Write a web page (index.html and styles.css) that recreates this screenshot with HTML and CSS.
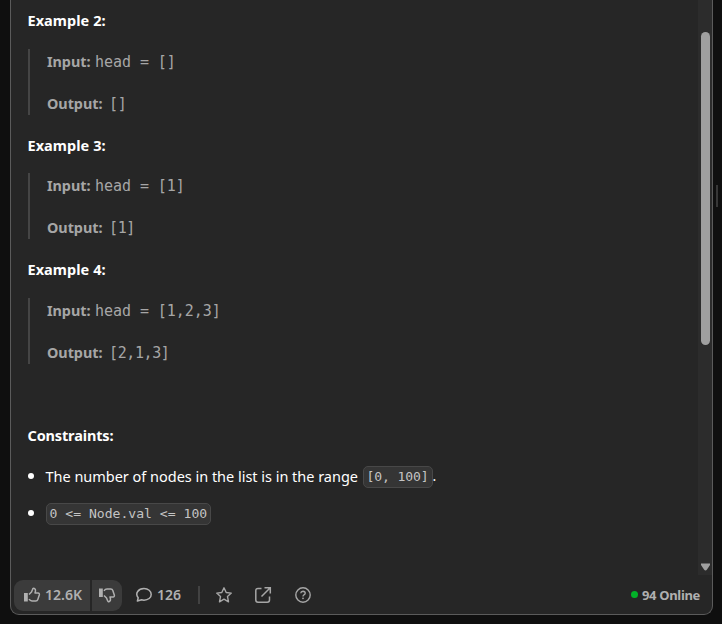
FILE: index.html
```html
<!DOCTYPE html>
<html lang="en">
<head>
<meta charset="utf-8">
<title>Problem description</title>
<link rel="stylesheet" href="styles.css">
</head>
<body>
<main class="panel">
  <div class="viewport">
    <article class="content">
      <h3>Example 2:</h3>
      <div class="example first">
        <p><b class="in">Input:</b><span class="mono">head = []</span></p>
        <p><b class="out">Output:</b><span class="mono">[]</span></p>
      </div>
      <h3>Example 3:</h3>
      <div class="example">
        <p><b class="in">Input:</b><span class="mono">head = [1]</span></p>
        <p><b class="out">Output:</b><span class="mono">[1]</span></p>
      </div>
      <h3>Example 4:</h3>
      <div class="example last">
        <p><b class="in">Input:</b><span class="mono">head = [1,2,3]</span></p>
        <p><b class="out">Output:</b><span class="mono">[2,1,3]</span></p>
      </div>
      <h3 class="constraints">Constraints:</h3>
      <ul>
        <li><span class="sentence">The number of nodes in the list is in the range</span><code>[0, 100]</code><span>.</span></li>
        <li><code>0 &lt;= Node.val &lt;= 100</code></li>
      </ul>
    </article>
    <div class="scrollbar"><div class="thumb"></div><svg class="down" width="9" height="8" viewBox="0 0 9 8"><path d="M0 0.5H9V2L6 6.5Q4.500 8.500 3 6.500L0 2Z" fill="#9f9f9f"/></svg></div>
  </div>
  <footer>
    <div class="votes">
      <button class="up"><svg width="18" height="16" viewBox="0 0 18 16"><path d="M1 6h3.800v8.500H1z" fill="#b0b0b0"/><path d="M6 7.500 8.500 5 9.500 2.500q.5-1.500 1.800-1 1.500.6 1.200 2.500L12 6h3q1.800.2 1.300 2l-1.500 4.500q-.5 1.500-2 1.500H9q-1.800 0-3-1.800" fill="none" stroke="#b0b0b0" stroke-width="1.500" stroke-linejoin="round"/></svg><span>12.6K</span></button>
      <button class="dn"><svg width="18" height="16" viewBox="0 0 18 16"><path d="M1 1.500h3.800v8.500H1z" fill="#b0b0b0"/><path d="M6 8.500 8.500 11 9.500 13.500q.5 1.500 1.800 1 1.500-.6 1.200-2.500L12 10h3q1.800-.2 1.300-2l-1.500-4.500q-.5-1.500-2-1.500H9q-1.800 0-3 1.800" fill="none" stroke="#b0b0b0" stroke-width="1.500" stroke-linejoin="round"/></svg></button>
    </div>
    <div class="comments"><svg width="18" height="16" viewBox="0 0 18 16"><path d="M2.400 14 3.200 10.800C-.4 6.300 3.500 1.500 9 1.500c4.200 0 7.200 2.600 7.200 5.900S13.200 13.200 9 13.200q-1.300 0-2.400-.4Z" fill="none" stroke="#b0b0b0" stroke-width="1.500" stroke-linejoin="round"/></svg><span>126</span></div>
    <i class="divider"></i>
    <svg class="star" width="18" height="18" viewBox="0 0 18 18"><path d="m9 1.800 2.200 4.700 5.100.6-3.800 3.500 1 5.200L9 13.200l-4.500 2.600 1-5.200L1.700 7.100l5.100-.6Z" fill="none" stroke="#a6a6a6" stroke-width="1.400" stroke-linejoin="round"/></svg>
    <svg class="share" width="18" height="18" viewBox="0 0 18 18"><path d="M7.500 2.500H4Q1.800 2.500 1.800 4.700V14Q1.800 16.200 4 16.200h9.300q2.200 0 2.200-2.200v-3.500M10.500 1.700h5.800v5.800M16 2 7.500 10.500" fill="none" stroke="#a6a6a6" stroke-width="1.500"/></svg>
    <svg class="help" width="18" height="18" viewBox="0 0 18 18"><circle cx="9" cy="9" r="7.200" fill="none" stroke="#a6a6a6" stroke-width="1.400"/><path d="M6.800 7.200Q6.900 5.400 9 5.300q2.200.1 2.200 1.900 0 1.100-1.200 1.700-1 .5-1 1.500" fill="none" stroke="#a6a6a6" stroke-width="1.400"/><circle cx="9" cy="12.300" r=".9" fill="#a6a6a6"/></svg>
    <div class="online"><i></i><span>94 Online</span></div>
  </footer>
</main>
<div class="resizer"></div>
</body>
</html>
```

FILE: styles.css
```css
* { box-sizing: border-box; }
body { margin: 0; width: 722px; height: 624px; overflow: hidden; background: #0f0f0f; display: flex; color: #fff; font: 14px/20px "Noto Sans", "Open Sans", sans-serif; }
.panel { width: 703px; height: 615px; margin-left: 10px; flex: none; border: 1px solid #5b5b5b; border-top: 0; border-radius: 0 0 9px 9px; background: #262626; display: flex; flex-direction: column; }
.viewport { height: 575px; display: flex; flex: none; }
.content { flex: 1; padding: 10px 0 0 16.500px; }
h3 { margin: 0; font-size: 14.5px; line-height: 20px; font-weight: 700; letter-spacing: .05px; height: 20px; }
.example { height: 66px; margin: 18px 0 20px .5px; padding: 3px 0 0 17px; border-left: 2px solid #454545; color: #a6a6a6; }
.example p { margin: 0 0 22px; height: 20px; display: flex; white-space: pre; }
.example.first, .example.last { margin-top: 19px; }
.example b { font-size: 14.400px; letter-spacing: -.05px; }
.in { width: 48px; }
.out { width: 62px; }
.mono { font: 15px/21px "DejaVu Sans Mono", monospace; letter-spacing: -.05px; }
.out + .mono { letter-spacing: -.4px; }
h3.constraints { margin-top: 61px; letter-spacing: -.15px; }
ul { margin: 20px 0 0; padding: 0; list-style: none; }
li { display: flex; align-items: center; height: 22px; margin-bottom: 15px; white-space: pre; }
li::before { content: ""; width: 6px; height: 6px; border-radius: 50%; background: #fff; margin-right: 12px; }
.sentence { width: 317px; font-size: 14.500px; letter-spacing: -.02px; }
code { height: 22px; margin-top: 1px; padding: 0 3px; border: 1px solid #484848; border-radius: 5px; background: #353535; color: #c4c4c4; font: 13.100px/20px "DejaVu Sans Mono", monospace; }
.sentence + code { width: 70px; margin-top: 2px; letter-spacing: -.15px; }
.scrollbar { width: 14px; background: #2c2c2c; display: flex; flex-direction: column; align-items: center; padding-top: 32px; }
.thumb { width: 9px; height: 313px; border-radius: 5px; background: #9f9f9f; }
.down { margin-top: 218px; }
footer { display: flex; align-items: center; height: 39px; padding: 0 12px 0 3px; color: #b0b0b0; font-weight: 600; }
.votes { display: flex; gap: 2px; border-radius: 9px; overflow: hidden; height: 31px; margin-top: 1px; }
button { border: 0; background: #3b3b3b; color: #b0b0b0; font: inherit; display: flex; align-items: center; padding: 0; height: 31px; }
.up { width: 76px; padding-left: 9px; gap: 4px; }
.dn { width: 30px; padding-left: 6px; }
.comments { display: flex; align-items: center; gap: 4px; margin-left: 13px; width: 63px; }
.divider { width: 2px; height: 18px; background: #424242; }
.star { margin-left: 15px; }
.share { margin-left: 21px; }
.help { margin-left: 22px; }
.online { margin-left: auto; display: flex; align-items: center; gap: 4px; font-size: 13px; font-weight: 700; letter-spacing: -.33px; }
.online i { width: 7px; height: 7px; border-radius: 50%; background: #02b128; }
.resizer { width: 2px; height: 22px; margin: 185px 0 0 3px; background: #373737; }
```
